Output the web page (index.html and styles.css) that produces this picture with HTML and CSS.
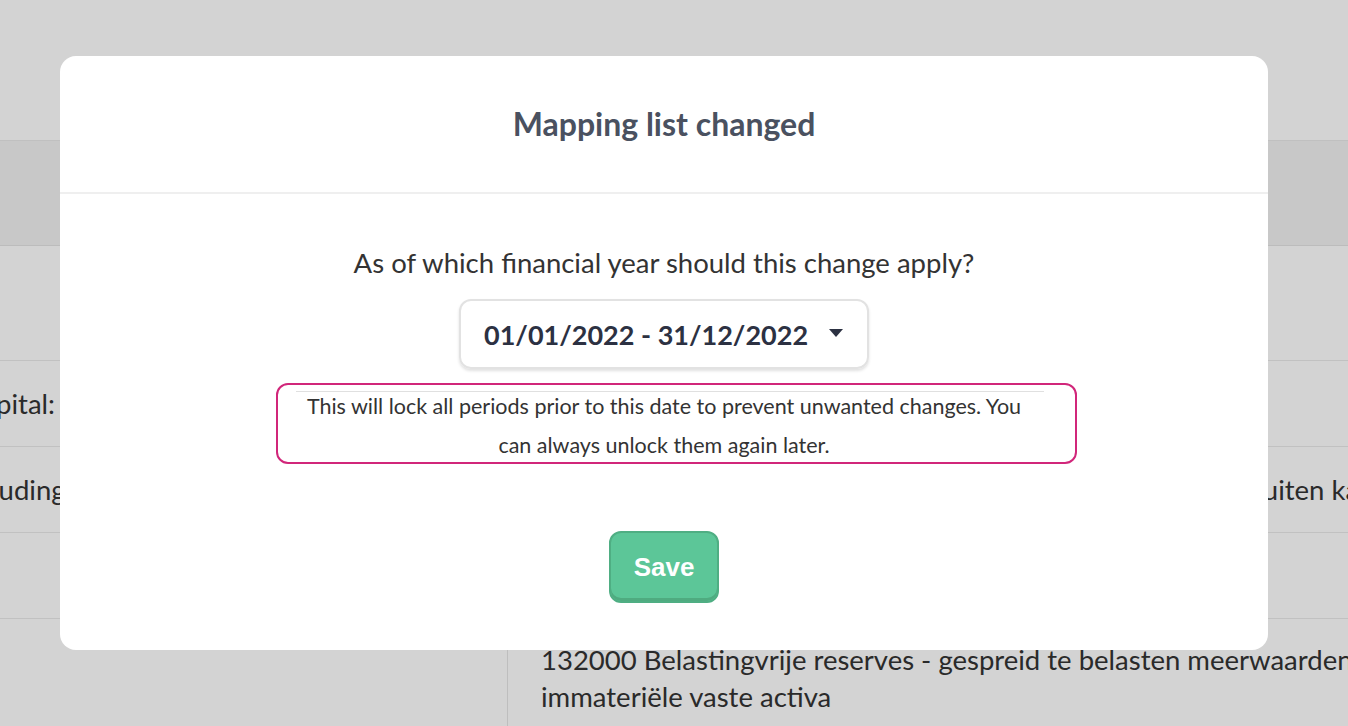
FILE: index.html
```html
<!DOCTYPE html>
<html lang="en">
<head>
<meta charset="utf-8">
<title>Mapping list changed</title>
<link rel="stylesheet" href="styles.css">
</head>
<body>
<div class="page">
  <div class="topbar"></div>
  <div class="thead"></div>
  <div class="row row-tall">
    <div class="cell-left"></div>
    <div class="cell-right"></div>
  </div>
  <div class="row">
    <div class="cell-left"><span class="clip-capital">Capital:</span></div>
    <div class="cell-right"></div>
  </div>
  <div class="row">
    <div class="cell-left"><span class="clip-excl">Excluding</span></div>
    <div class="cell-right"><span class="clip-buiten">Kosten van de uitgifte van aandelen en alle overige posten buiten kapitaal</span></div>
  </div>
  <div class="row">
    <div class="cell-left"></div>
    <div class="cell-right"></div>
  </div>
  <div class="row row-last">
    <div class="cell-left"></div>
    <div class="cell-right"><p class="multi">132000 Belastingvrije reserves - gespreid te belasten meerwaarden op immateriële vaste activa</p></div>
  </div>
</div>

<div class="overlay"></div>

<div class="modal">
  <div class="modal-header">
    <h2 class="modal-title">Mapping list changed</h2>
  </div>
  <div class="modal-body">
    <p class="question">As of which financial year should this change apply?</p>
    <div class="select">
      <span class="select-value">01/01/2022 - 31/12/2022</span>
      <svg class="caret" width="14" height="8" viewBox="0 0 14 8"><polygon points="0,0 14,0 7,8" fill="#2c3142"/></svg>
    </div>
    <div class="notice">
      <div class="notice-rule"></div>
      <p class="notice-text">This will lock all periods prior to this date to prevent unwanted changes. You can always unlock them again later.</p>
    </div>
    <button class="btn-save" type="button">Save</button>
  </div>
</div>
</body>
</html>
```

FILE: styles.css
```css
* {
  box-sizing: border-box;
}

html, body {
  margin: 0;
  padding: 0;
  height: 100%;
  overflow: hidden;
}

body {
  font-family: Lato, "Noto Sans", sans-serif;
  color: #333;
  background: #fff;
}

.page {
  width: 100%;
  overflow: hidden;
}

.topbar {
  height: 140px;
  background: #fff;
}

.thead {
  height: 106px;
  background: #f2f2f2;
  border-top: 1px solid #e8e8e8;
  border-bottom: 1px solid #e4e4e4;
}

.row {
  display: flex;
  height: 86px;
  border-bottom: 1px solid #eaeaea;
  font-size: 27.5px;
  white-space: nowrap;
}

.row-tall {
  height: 115px;
}

.row-last {
  height: 140px;
  border-bottom: none;
}

.cell-left {
  width: 508px;
  flex: none;
  display: flex;
  align-items: center;
  border-right: 1px solid #e6e6e6;
  overflow: hidden;
}

.cell-right {
  flex: 1;
  display: flex;
  align-items: center;
  padding-left: 33px;
  overflow: hidden;
}

.row-last .cell-right {
  align-items: flex-start;
}

.clip-capital {
  margin-left: -36px;
}

.clip-excl {
  margin-left: -50px;
}

.multi {
  margin: 0;
  padding-top: 22px;
  width: 900px;
  flex: none;
  white-space: normal;
  line-height: 37px;
}

.overlay {
  position: fixed;
  inset: 0;
  background: rgba(0, 0, 0, 0.173);
}

.modal {
  position: fixed;
  left: 60px;
  top: 56px;
  width: 1208px;
  height: 594px;
  background: #fff;
  border-radius: 16px;
  display: flex;
  flex-direction: column;
}

.modal-header {
  height: 138px;
  border-bottom: 2px solid #efefef;
  display: flex;
  justify-content: center;
  align-items: flex-start;
}

.modal-title {
  margin: 48px 0 0;
  font-size: 32px;
  line-height: 40px;
  font-weight: 700;
  color: #4a5160;
}

.modal-body {
  display: flex;
  flex-direction: column;
  align-items: center;
  padding-top: 54px;
}

.question {
  margin: 0;
  font-size: 27.5px;
  line-height: 30px;
  color: #333;
}

.select {
  margin-top: 21px;
  width: 410px;
  height: 70px;
  border: 2px solid #e2e2e2;
  border-radius: 12px;
  box-shadow: 0 2px 3px rgba(0, 0, 0, 0.12);
  display: flex;
  align-items: center;
  justify-content: space-between;
  padding: 0 24px 0 23px;
}

.select-value {
  font-size: 27px;
  font-weight: 700;
  color: #2c3142;
}

.caret {
  display: block;
  margin-top: -2px;
}

.notice {
  margin-top: 14px;
  margin-left: 25px;
  width: 801px;
  height: 81px;
  border: 2px solid #d1267a;
  border-radius: 12px;
  padding: 6px 31px 0 18px;
}

.notice-rule {
  height: 1px;
  background: #e0e0e0;
}

.notice-text {
  margin: -5px 0 0;
  padding: 0 12px 0 0;
  font-size: 21.5px;
  line-height: 39px;
  text-align: center;
  color: #333;
}

.btn-save {
  margin-top: 67px;
  width: 110px;
  height: 72px;
  background: #5cc698;
  border: 2px solid #4fae83;
  border-radius: 12px;
  box-shadow: inset 0 -3px 0 #4fab80;
  color: #fff;
  font-family: "Liberation Sans", Arial, sans-serif;
  font-weight: 700;
  font-size: 26px;
  padding: 0;
}
```
